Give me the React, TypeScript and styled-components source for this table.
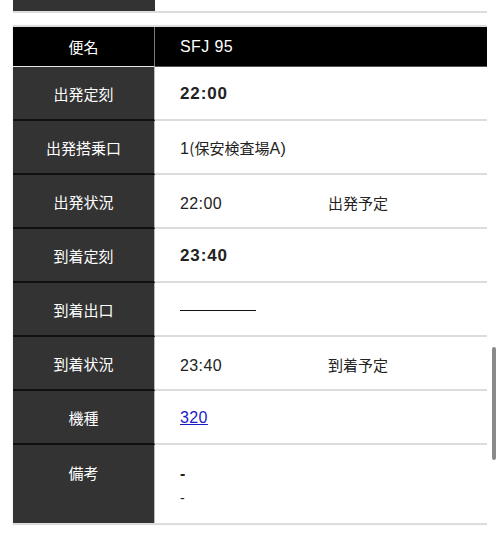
import React from "react";
import styled, { createGlobalStyle } from "styled-components";

const Global = createGlobalStyle`
  html, body { margin: 0; padding: 0; background: #fff; }
  body {
    font-family: "Liberation Sans", "Noto Sans CJK JP", sans-serif;
    -webkit-font-smoothing: antialiased;
  }
`;

const Page = styled.div`
  position: relative;
  width: 500px;
  height: 541px;
  overflow: hidden;
  padding: 0 13px;
  box-sizing: border-box;
`;

const PrevTable = styled.div`
  display: flex;
  height: 11px;
  border-bottom: 2px solid #dcdcdc;
`;

const PrevLabel = styled.div`
  width: 142px;
  background: #333;
`;

const Table = styled.div`
  margin-top: 12px;
  border-top: 2px solid #dcdcdc;
  border-bottom: 2px solid #dcdcdc;
  box-shadow: -1px 0 2px rgba(0, 0, 0, 0.06);
`;

const Row = styled.div<{ $h: number; $header?: boolean }>`
  display: flex;
  height: ${(p) => p.$h}px;
  align-items: stretch;
  background: ${(p) => (p.$header ? "#000" : "#fff")};
`;

const Label = styled.div<{ $top?: boolean; $header?: boolean; $last?: boolean }>`
  width: 142px;
  flex: none;
  box-sizing: border-box;
  background: ${(p) => (p.$header ? "#000" : "#333")};
  color: #fff;
  font-family: "Noto Sans CJK JP", sans-serif;
  font-size: 15px;
  display: flex;
  justify-content: center;
  align-items: ${(p) => (p.$top ? "flex-start" : "center")};
  padding-top: ${(p) => (p.$top ? "17px" : "0")};
  border-right: 1px solid ${(p) => (p.$header ? "#777" : "#bbb")};
  border-bottom: ${(p) =>
    p.$last ? "none" : p.$header ? "1px solid #e6e6e6" : "2px solid #111"};
`;

const Value = styled.div<{ $top?: boolean; $header?: boolean; $last?: boolean }>`
  flex: 1;
  box-sizing: border-box;
  padding-left: 25px;
  color: ${(p) => (p.$header ? "#fff" : "#222")};
  font-size: 16px;
  letter-spacing: 0.4px;
  display: flex;
  flex-direction: column;
  justify-content: ${(p) => (p.$top ? "flex-start" : "center")};
  padding-top: ${(p) => (p.$top ? "17px" : "0")};
  border-bottom: ${(p) =>
    p.$last ? "none" : p.$header ? "1px solid #555" : "2px solid #dcdcdc"};
`;

const Bold = styled.span`
  font-weight: bold;
  font-size: 17px;
  letter-spacing: 0.9px;
  padding-top: 2px;
`;

const Status = styled.div`
  display: grid;
  grid-template-columns: 148px auto;
  align-items: baseline;
  padding-top: 2px;
`;

const Jp = styled.span`
  font-family: "Noto Sans CJK JP", sans-serif;
  font-size: 15px;
  letter-spacing: 0;
`;

const Dash = styled.span`
  display: inline-block;
  width: 76px;
  height: 0;
  margin-top: 3px;
  border-top: 1.5px solid #111;
`;

const Link = styled.a`
  color: #1a1ac8;
  text-decoration: underline;
  align-self: flex-start;
  padding-top: 2px;
`;

const NoteLine = styled.div<{ $bold?: boolean }>`
  line-height: 24px;
  font-weight: ${(p) => (p.$bold ? "bold" : "normal")};
  font-size: ${(p) => (p.$bold ? "16px" : "14px")};
`;

const Scrollbar = styled.div`
  position: absolute;
  right: 4px;
  top: 347px;
  width: 4px;
  height: 113px;
  border-radius: 2px;
  background: #8a8a8a;
`;

export default function App() {
  return (
    <>
      <Global />
      <Page>
        <PrevTable>
          <PrevLabel />
        </PrevTable>
        <Table>
          <Row $h={40} $header>
            <Label $header>便名</Label>
            <Value $header>SFJ 95</Value>
          </Row>
          <Row $h={54}>
            <Label>出発定刻</Label>
            <Value>
              <Bold>22:00</Bold>
            </Value>
          </Row>
          <Row $h={54}>
            <Label>出発搭乗口</Label>
            <Value>
              <span>
                1<Jp>(保安検査場</Jp>A)
              </span>
            </Value>
          </Row>
          <Row $h={54}>
            <Label>出発状況</Label>
            <Value>
              <Status>
                <span>22:00</span>
                <Jp>出発予定</Jp>
              </Status>
            </Value>
          </Row>
          <Row $h={54}>
            <Label>到着定刻</Label>
            <Value>
              <Bold>23:40</Bold>
            </Value>
          </Row>
          <Row $h={54}>
            <Label>到着出口</Label>
            <Value>
              <Dash />
            </Value>
          </Row>
          <Row $h={54}>
            <Label>到着状況</Label>
            <Value>
              <Status>
                <span>23:40</span>
                <Jp>到着予定</Jp>
              </Status>
            </Value>
          </Row>
          <Row $h={54}>
            <Label>機種</Label>
            <Value>
              <Link href="#">320</Link>
            </Value>
          </Row>
          <Row $h={78}>
            <Label $top $last>
              備考
            </Label>
            <Value $top $last>
              <NoteLine $bold>-</NoteLine>
              <NoteLine>-</NoteLine>
            </Value>
          </Row>
        </Table>
        <Scrollbar />
      </Page>
    </>
  );
}
